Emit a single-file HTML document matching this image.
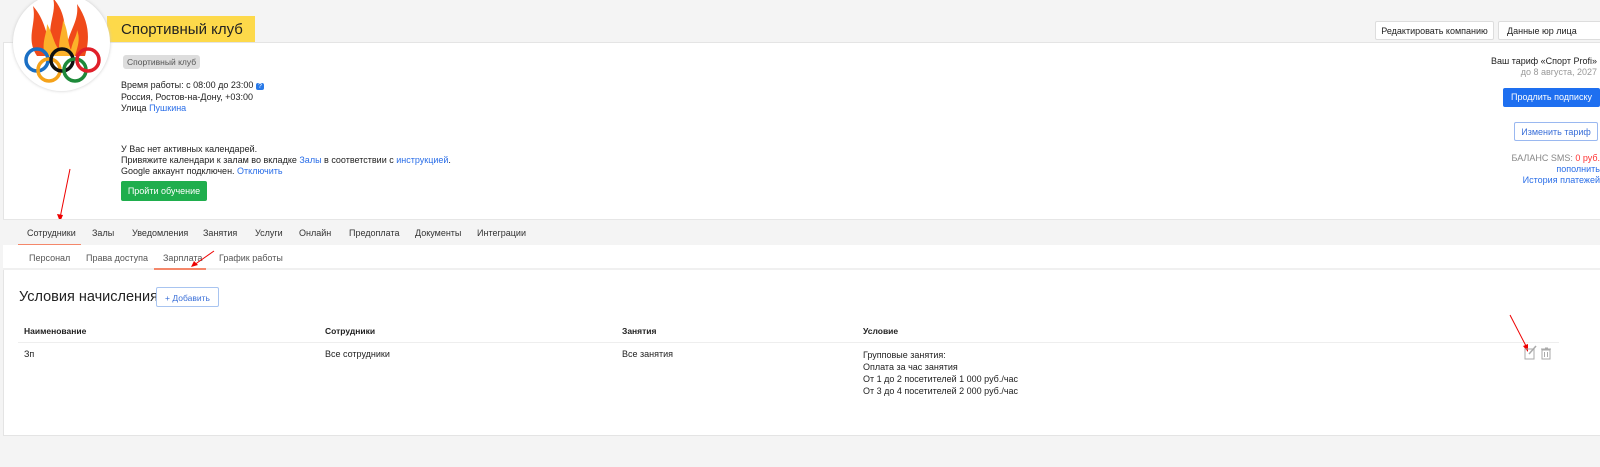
<!DOCTYPE html>
<html><head><meta charset="utf-8"><style>
*{margin:0;padding:0;box-sizing:border-box}
body{width:1600px;height:467px;background:#f4f4f4;font-family:"Liberation Sans",Arial,sans-serif;font-size:9px;color:#222;position:relative;overflow:hidden}
.abs{position:absolute}
.panel{left:3px;top:42px;width:1600px;height:394px;background:#fff;border:1px solid #e4e4e4}
a{color:#2a6ee8;text-decoration:none}
.btn{position:absolute;border:1px solid #ddd;background:#fff;font-size:9px;text-align:center;border-radius:2px}
.tabs{left:3px;top:219px;width:1600px;height:26px;background:#f4f4f4;border-top:1px solid #e6e6e6}
.tabs span,.sub span{position:absolute;top:8px;font-size:9px;color:#333;white-space:nowrap}
.sub{left:3px;top:245px;width:1600px;height:25px;background:#fff;border-bottom:2px solid #f0f0f0}
.sub span{color:#555}
</style></head><body>
<div class="abs panel"></div>
<div class="abs" style="left:107px;top:16px;width:148px;height:26px;background:#fdd94a;font-size:15px;padding:5px 0 0 14px">Спортивный клуб</div>
<div class="abs" style="left:13px;top:-6px;width:97px;height:97px;border-radius:50%;background:#fff;box-shadow:0 0 3px #ccc;overflow:hidden">
<svg width="97" height="97" viewBox="0 0 97 97">
<path d="M24 62 C12 44 24 30 20 12 C32 26 32 38 38 50 C34 30 44 18 40 4 C56 22 50 40 54 50 C58 34 66 26 64 10 C78 30 76 48 72 62 Z" fill="#f04a1a"/>
<path d="M32 62 C28 48 34 40 34 30 C40 40 40 48 46 56 C46 42 50 34 50 26 C56 38 54 48 58 56 C60 46 64 42 64 36 C68 46 64 54 62 62 Z" fill="#fcb22a"/>
<g fill="none" stroke-width="3.5"><circle cx="24" cy="66" r="11" stroke="#1a6fc4"/><circle cx="36" cy="76" r="11" stroke="#f5a21a"/><circle cx="49" cy="66" r="11" stroke="#111"/><circle cx="62" cy="76" r="11" stroke="#1e8a3a"/><circle cx="75" cy="66" r="11" stroke="#e0202a"/></g></svg></div>
<div class="btn" style="left:1375px;top:21px;width:119px;height:19px;padding-top:4px">Редактировать компанию</div>
<div class="btn" style="left:1498px;top:21px;width:110px;height:19px;padding-top:4px;text-align:left;padding-left:8px">Данные юр лица</div>
<div class="abs" style="left:123px;top:55px;background:#ddd;border-radius:3px;padding:2px 4px;color:#555;font-size:8.5px">Спортивный клуб</div>
<div class="abs" style="left:121px;top:80px;line-height:11px">Время работы: с 08:00 до 23:00 <span style="background:#2a7ae8;color:#fff;font-size:7px;padding:0 2px;border-radius:2px">?</span><br>Россия, Ростов-на-Дону, +03:00<br>Улица <a>Пушкина</a></div>
<div class="abs" style="left:121px;top:144px;line-height:11px">У Вас нет активных календарей.<br>Привяжите календари к залам во вкладке <a>Залы</a> в соответствии с <a>инструкцией</a>.<br>Google аккаунт подключен. <a>Отключить</a></div>
<div class="abs" style="left:121px;top:181px;width:86px;height:20px;background:#1fae4d;border-radius:2px;color:#fff;font-size:9px;text-align:center;padding-top:5px">Пройти обучение</div>
<div class="abs" style="right:3px;top:56px;text-align:right;line-height:11px">Ваш тариф «Спорт Profi»<br><span style="color:#999">до 8 августа, 2027</span></div>
<div class="abs" style="left:1503px;top:88px;width:97px;height:19px;background:#1e6ff0;border-radius:2px;color:#fff;text-align:center;padding-top:4px">Продлить подписку</div>
<div class="abs" style="left:1514px;top:122px;width:84px;height:19px;border:1px solid #9ab8f0;border-radius:2px;color:#3a6fd8;text-align:center;padding-top:4px">Изменить тариф</div>
<div class="abs" style="right:0;top:153px;text-align:right;line-height:11px;color:#888">БАЛАНС SMS: <span style="color:#f33">0 руб.</span><br><a>пополнить</a><br><a>История платежей</a></div>
<svg class="abs" style="left:55px;top:168px" width="20" height="56"><line x1="15" y1="1" x2="5" y2="50" stroke="#e00" stroke-width="1"/><path d="M2 46 L5 54 L8 47Z" fill="#e00"/></svg>
<div class="abs tabs">
<span style="left:24px">Сотрудники</span><span style="left:89px">Залы</span><span style="left:129px">Уведомления</span><span style="left:200px">Занятия</span><span style="left:252px">Услуги</span><span style="left:296px">Онлайн</span><span style="left:346px">Предоплата</span><span style="left:412px">Документы</span><span style="left:474px">Интеграции</span>
<div class="abs" style="left:15px;top:24px;width:63px;height:1px;background:#f4876a"></div></div>
<div class="abs sub">
<span style="left:26px">Персонал</span><span style="left:83px">Права доступа</span><span style="left:160px">Зарплата</span><span style="left:216px">График работы</span>
<div class="abs" style="left:151px;top:23px;width:52px;height:2px;background:#f4876a"></div></div>
<svg class="abs" style="left:188px;top:250px" width="30" height="18"><line x1="26" y1="1" x2="6" y2="15" stroke="#e00"/><path d="M3 17 L10 15 L6 11Z" fill="#e00"/></svg>
<div class="abs" style="left:19px;top:289px;font-size:14.5px;color:#222">Условия начисления</div>
<div class="abs" style="left:156px;top:287px;width:63px;height:20px;border:1px solid #a8c4f0;border-radius:2px;color:#3a6fd8;font-size:8.5px;text-align:center;padding-top:5px">+ Добавить</div>
<div class="abs" style="left:18px;top:342px;width:1541px;height:1px;background:#eee"></div>
<div class="abs" style="left:24px;top:326px;font-weight:bold;font-size:8.5px">Наименование</div>
<div class="abs" style="left:325px;top:326px;font-weight:bold;font-size:8.5px">Сотрудники</div>
<div class="abs" style="left:622px;top:326px;font-weight:bold;font-size:8.5px">Занятия</div>
<div class="abs" style="left:863px;top:326px;font-weight:bold;font-size:8.5px">Условие</div>
<div class="abs" style="left:24px;top:349px">Зп</div>
<div class="abs" style="left:325px;top:349px">Все сотрудники</div>
<div class="abs" style="left:622px;top:349px">Все занятия</div>
<div class="abs" style="left:863px;top:349px;line-height:12px">Групповые занятия:<br>Оплата за час занятия<br>От 1 до 2 посетителей 1 000 руб./час<br>От 3 до 4 посетителей 2 000 руб./час</div>
<svg class="abs" style="left:1508px;top:313px" width="50" height="48"><line x1="2" y1="2" x2="18" y2="33" stroke="#e00"/><path d="M15 33 L20 39 L20 31Z" fill="#e00"/>
<rect x="17" y="36" width="9" height="10" fill="none" stroke="#aaa"/><path d="M21 41 L28 33" stroke="#aaa" stroke-width="1.5"/>
<rect x="34" y="37" width="8" height="9" fill="none" stroke="#aaa"/><path d="M33 36 H43 M37 35 H40 M36.5 39 V44 M39.5 39 V44" stroke="#aaa"/></svg>
</body></html>
